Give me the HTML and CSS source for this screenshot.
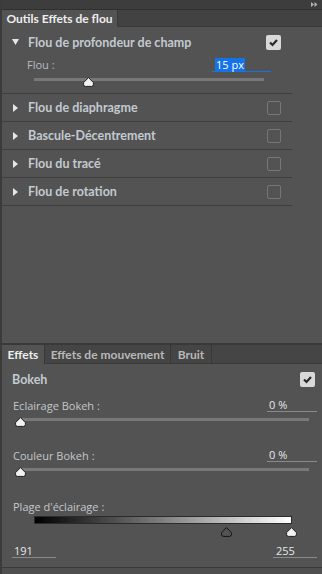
FILE: index.html
```html
<!DOCTYPE html>
<html lang="fr">
<head>
  <meta charset="UTF-8">
  <meta name="viewport" content="width=device-width, initial-scale=1.0">
  <title>Outils Effets de flou</title>
  <link rel="stylesheet" href="styles.css">
</head>
<body>
<div class="app">
  <div class="topstrip">
    <svg class="collapse" width="7" height="5" viewBox="0 0 7 5"><path d="M0 0 L3 2.5 L0 5 Z M3.5 0 L6.5 2.5 L3.5 5 Z" fill="#b4b4b4"/></svg>
  </div>
  <div class="tabbar">
    <div class="tab active">Outils Effets de flou</div>
  </div>

  <div class="panel top-panel">
    <div class="group open">
      <div class="group-head">
        <span class="twisty"><svg width="7" height="6" viewBox="0 0 7 6"><path d="M0 0 H7 L3.5 6 Z" fill="#e6e6e6"/></svg></span>
        <span class="group-title">Flou de profondeur de champ</span>
        <span class="check on"><svg width="15" height="15" viewBox="0 0 15 15"><path d="M4 7.5 L6.5 10 L11 5" fill="none" stroke="#2a2a2a" stroke-width="2.2"/></svg></span>
      </div>
      <div class="param flou">
        <span class="label">Flou :</span>
        <span class="field editing"><span class="sel">15 px</span></span>
      </div>
      <div class="slider flou-slider">
        <div class="track"></div>
        <svg class="thumb" style="left:49px" width="11" height="10" viewBox="0 0 11 10"><path d="M5.5 0.6 L10.4 5.6 V7.6 Q10.4 9.4 8.6 9.4 H2.4 Q0.6 9.4 0.6 7.6 V5.6 Z" fill="#f2f2f2" stroke="#1e1e1e" stroke-width="1"/></svg>
      </div>
    </div>
    <div class="group">
      <div class="group-head">
        <span class="twisty"><svg width="5" height="8" viewBox="0 0 5 8"><path d="M0 0 L5 4 L0 8 Z" fill="#e6e6e6"/></svg></span>
        <span class="group-title">Flou de diaphragme</span>
        <span class="check"></span>
      </div>
    </div>
    <div class="group">
      <div class="group-head">
        <span class="twisty"><svg width="5" height="8" viewBox="0 0 5 8"><path d="M0 0 L5 4 L0 8 Z" fill="#e6e6e6"/></svg></span>
        <span class="group-title">Bascule-Décentrement</span>
        <span class="check"></span>
      </div>
    </div>
    <div class="group">
      <div class="group-head">
        <span class="twisty"><svg width="5" height="8" viewBox="0 0 5 8"><path d="M0 0 L5 4 L0 8 Z" fill="#e6e6e6"/></svg></span>
        <span class="group-title">Flou du tracé</span>
        <span class="check"></span>
      </div>
    </div>
    <div class="group">
      <div class="group-head">
        <span class="twisty"><svg width="5" height="8" viewBox="0 0 5 8"><path d="M0 0 L5 4 L0 8 Z" fill="#e6e6e6"/></svg></span>
        <span class="group-title">Flou de rotation</span>
        <span class="check"></span>
      </div>
    </div>
  </div>

  <div class="panel bottom-panel">
    <div class="tabbar small-tabs">
      <div class="tab active">Effets</div>
      <div class="tab motion">Effets de mouvement</div>
      <div class="tab noise">Bruit</div>
    </div>

    <div class="bokeh-head">
      <span class="group-title">Bokeh</span>
      <span class="check on"><svg width="15" height="15" viewBox="0 0 15 15"><path d="M4 7.5 L6.5 10 L11 5" fill="none" stroke="#2a2a2a" stroke-width="2.2"/></svg></span>
    </div>

    <div class="param effect first">
      <span class="label">Eclairage Bokeh :</span>
      <span class="field pct">0 %</span>
    </div>
    <div class="slider effect-slider">
      <div class="track"></div>
      <svg class="thumb" style="left:-3px" width="11" height="10" viewBox="0 0 11 10"><path d="M5.5 0.6 L10.4 5.6 V7.6 Q10.4 9.4 8.6 9.4 H2.4 Q0.6 9.4 0.6 7.6 V5.6 Z" fill="#f2f2f2" stroke="#1e1e1e" stroke-width="1"/></svg>
    </div>

    <div class="param effect">
      <span class="label">Couleur Bokeh :</span>
      <span class="field pct">0 %</span>
    </div>
    <div class="slider effect-slider">
      <div class="track"></div>
      <svg class="thumb" style="left:-3px" width="11" height="10" viewBox="0 0 11 10"><path d="M5.5 0.6 L10.4 5.6 V7.6 Q10.4 9.4 8.6 9.4 H2.4 Q0.6 9.4 0.6 7.6 V5.6 Z" fill="#f2f2f2" stroke="#1e1e1e" stroke-width="1"/></svg>
    </div>

    <div class="param range-label">
      <span class="label">Plage d'éclairage :</span>
    </div>
    <div class="ramp"></div>
    <div class="ramp-thumbs">
      <svg class="thumb" style="left:187px" width="11" height="10" viewBox="0 0 11 10"><path d="M5.5 0.6 L10.4 5.6 V7.6 Q10.4 9.4 8.6 9.4 H2.4 Q0.6 9.4 0.6 7.6 V5.6 Z" fill="none" stroke="#141414" stroke-width="1"/></svg>
      <svg class="thumb" style="left:252px" width="11" height="10" viewBox="0 0 11 10"><path d="M5.5 0.6 L10.4 5.6 V7.6 Q10.4 9.4 8.6 9.4 H2.4 Q0.6 9.4 0.6 7.6 V5.6 Z" fill="#f2f2f2" stroke="#1e1e1e" stroke-width="1"/></svg>
    </div>
    <div class="range-values">
      <span class="field num low">191</span>
      <span class="field num high">255</span>
    </div>
    <div class="footer-strip"></div>
  </div>
</div>
</body>
</html>
```

FILE: styles.css
```css
* {
  box-sizing: border-box;
}

body {
  margin: 0;
  background: #535353;
  font-family: "Open Sans", "Liberation Sans", sans-serif;
  font-size: 11px;
  color: #c4c8cc;
}

.app {
  width: 322px;
  height: 574px;
  display: flex;
  flex-direction: column;
  border-left: 2px solid #3b3b3b;
  overflow: hidden;
}

.topstrip {
  height: 9px;
  background: #3d3d3d;
  position: relative;
  flex-shrink: 0;
}
.collapse {
  position: absolute;
  right: 4px;
  top: 2px;
}

.tabbar {
  height: 18px;
  display: flex;
  background: #424242;
  border-top: 1px solid #2f2f2f;
  box-shadow: inset 0 -1px 0 #383838;
  flex-shrink: 0;
}
.tab {
  display: flex;
  align-items: center;
  justify-content: center;
  white-space: nowrap;
  font-family: Lato, "Open Sans", sans-serif;
  font-size: 12px;
  font-weight: bold;
  color: #b8b8b8;
  border-right: 1px solid #383838;
}
.tab.active {
  background: #535353;
  color: #eeeeee;
  width: 116px;
}

.panel {
  background: #535353;
}
.top-panel {
  flex: 1;
}

/* groups */
.group {
  width: 290px;
  border-bottom: 1px solid #3e3e3e;
}
.group.open {
  padding-top: 8px;
}
.group-head {
  display: flex;
  align-items: center;
  height: 27px;
  padding-left: 10px;
  padding-right: 11px;
}
.group.open .group-head {
  height: 14px;
}
.twisty {
  width: 16px;
  display: flex;
  align-items: center;
  padding-left: 1px;
}
.group.open .twisty {
  padding-left: 0;
}
.twisty svg {
  display: block;
}
.group-title {
  flex: 1;
  font-family: Lato, "Open Sans", sans-serif;
  font-size: 12.5px;
  font-weight: bold;
  color: #c3cad0;
}

.check {
  width: 14px;
  height: 14px;
  border: 1px solid #777777;
  border-radius: 2px;
  flex-shrink: 0;
}
.check.on {
  width: 15px;
  height: 15px;
  border: none;
  background: #d9d9d9;
}
.check svg {
  display: block;
}

/* params */
.param {
  display: flex;
  align-items: stretch;
}
.label {
  display: flex;
  align-items: center;
}
.field {
  display: flex;
  align-items: center;
  border-bottom: 1px solid #8a8a8a;
  color: #e4e8ec;
}

.param.flou {
  margin-top: 8px;
  height: 15px;
  padding-left: 25px;
  width: 290px;
}
.param.flou .label {
  color: #b6bcc2;
}
.field.editing {
  margin-left: auto;
  margin-right: 21px;
  width: 59px;
  padding-left: 3px;
  border-bottom-color: #1473e6;
  align-items: flex-start;
}
.sel {
  background: #1473e6;
  color: #ffffff;
  padding: 0 1px;
  height: 13px;
  line-height: 13px;
  margin-top: 1px;
}

.slider {
  position: relative;
}
.track {
  position: absolute;
  height: 3px;
  background: #787878;
}
.thumb {
  position: absolute;
  display: block;
}
.flou-slider {
  height: 21px;
  margin-left: 32px;
}
.flou-slider .track {
  top: 6px;
  left: 0;
  width: 230px;
}
.flou-slider .thumb {
  top: 5px;
}

/* bottom panel */
.bottom-panel {
  flex-shrink: 0;
  border-top: 2px solid #393939;
}
.small-tabs {
  height: 19px;
  border-top: none;
  background: #454545;
}
.small-tabs .tab.active {
  width: 43px;
}
.small-tabs .tab.motion {
  width: 126px;
}
.small-tabs .tab.noise {
  width: 41px;
}

.bokeh-head {
  display: flex;
  align-items: center;
  height: 14px;
  margin-top: 8px;
  padding-left: 10px;
  padding-right: 7px;
}

.param.effect {
  height: 14px;
  margin-top: 16px;
  padding-left: 11px;
}
.param.effect.first {
  margin-top: 12px;
}
.field.pct {
  margin-left: auto;
  margin-right: 5px;
  width: 50px;
  padding-left: 2px;
}
.effect-slider {
  height: 20px;
  margin-left: 16px;
}
.effect-slider .track {
  top: 6px;
  left: 2px;
  width: 289px;
}
.effect-slider .thumb {
  top: 5px;
}

.param.range-label {
  height: 14px;
  margin-top: 17px;
  padding-left: 11px;
}
.ramp {
  margin-top: 3px;
  margin-left: 32px;
  width: 258px;
  height: 8px;
  border: 1px solid #2b2b2b;
  background: linear-gradient(to right, #000000, #ffffff);
}
.ramp-thumbs {
  position: relative;
  margin-top: 3px;
  margin-left: 32px;
  height: 10px;
}
.ramp-thumbs .thumb {
  top: 0;
}

.range-values {
  display: flex;
  height: 15px;
  margin-top: 6px;
  padding-left: 10px;
  padding-right: 5px;
}
.field.num {
  width: 44px;
  padding-left: 2px;
}
.field.num.high {
  margin-left: auto;
  padding-left: 3px;
}

.footer-strip {
  margin-top: 9px;
  border-top: 1px solid #3a3a3a;
  height: 7px;
  background: #4f4f4f;
}
```
